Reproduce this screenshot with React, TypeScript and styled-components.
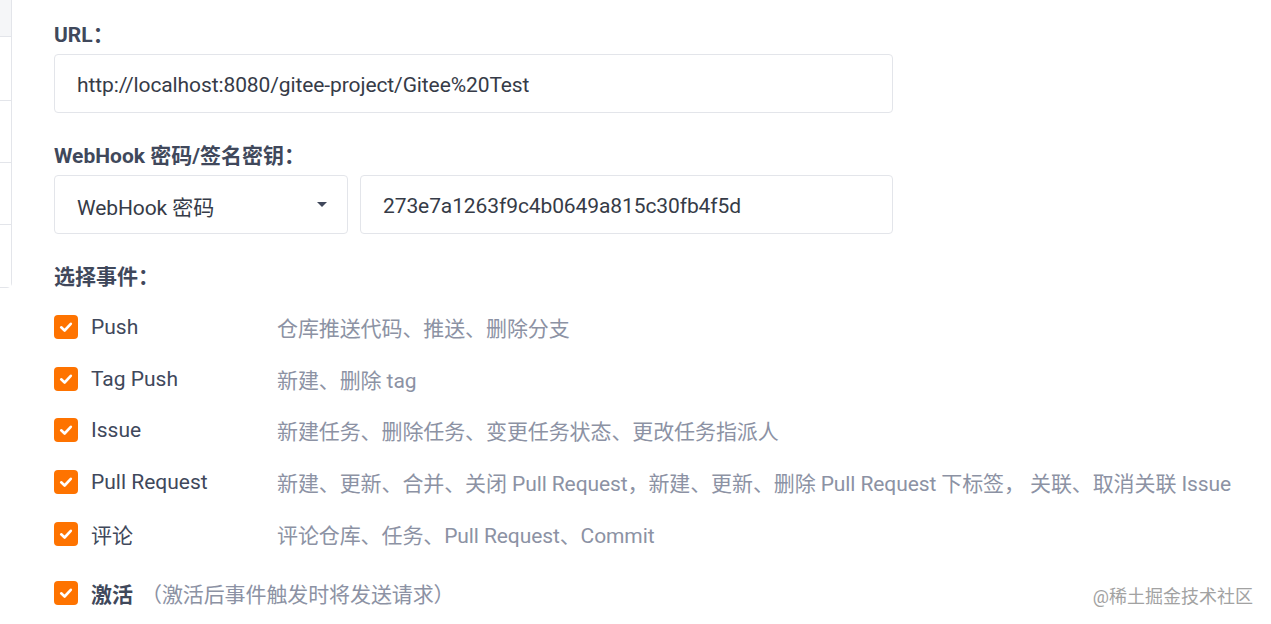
import React from "react";
import styled, { createGlobalStyle } from "styled-components";

const GlobalStyle = createGlobalStyle`
  html, body { margin: 0; padding: 0; background: #ffffff; }
  body {
    font-family: Roboto, "Noto Sans CJK SC", sans-serif;
    color: #40485b;
    width: 1271px;
    height: 624px;
    overflow: hidden;
  }
`;

const Page = styled.div`
  position: relative;
  display: flex;
  align-items: flex-start;
  width: 1271px;
  height: 624px;
  background: #fff;
`;

const SideCard = styled.div`
  width: 11px;
  border-right: 1px solid #e3e5ea;
  border-bottom: 1px solid #e3e5ea;
  border-bottom-right-radius: 5px;
  display: flex;
  flex-direction: column;
`;

const SideItem = styled.div<{ $h: number; $active?: boolean }>`
  height: ${(p) => p.$h}px;
  background: ${(p) => (p.$active ? "#f5f6f8" : "#fff")};
  border-top: ${(p) => (p.$active ? "none" : "1px solid #e3e5ea")};
  box-sizing: border-box;
`;

const Main = styled.div`
  margin-left: 42px;
  padding-top: 21px;
  display: flex;
  flex-direction: column;
  width: 839px;
`;

const Label = styled.div<{ $mt?: number }>`
  font-size: 21px;
  font-weight: 700;
  line-height: 28px;
  color: #40485b;
  margin-top: ${(p) => p.$mt ?? 0}px;
  margin-bottom: 5px;
  white-space: nowrap;
`;

const InputBox = styled.div<{ $w?: number; $grow?: boolean }>`
  box-sizing: border-box;
  height: 59px;
  ${(p) => (p.$w ? `width: ${p.$w}px; flex-shrink: 0;` : "")}
  ${(p) => (p.$grow ? "flex: 1;" : "")}
  border: 1px solid #e3e5ea;
  border-radius: 4px;
  padding: 2px 22px 0;
  display: flex;
  align-items: center;
  justify-content: space-between;
  font-size: 21px;
  letter-spacing: -0.1px;
  color: #363b47;
  background: #fff;
  white-space: nowrap;
`;

const InputRow = styled.div`
  display: flex;
  gap: 12px;
`;

const Caret = styled.span`
  width: 0;
  height: 0;
  border-left: 5px solid transparent;
  border-right: 5px solid transparent;
  border-top: 5px solid #40485b;
  margin-right: -2px;
  margin-top: -2px;
`;

const EventList = styled.div`
  margin-top: 5px;
  display: flex;
  flex-direction: column;
`;

const EventRow = styled.div<{ $mt?: number }>`
  height: 51.75px;
  display: flex;
  align-items: center;
  margin-top: ${(p) => p.$mt ?? 0}px;
`;

const CheckBox = styled.span`
  width: 24px;
  height: 24px;
  border-radius: 4px;
  background: #fe7300;
  display: inline-flex;
  align-items: center;
  justify-content: center;
  flex-shrink: 0;
`;

const EventName = styled.span<{ $bold?: boolean }>`
  margin-left: 13px;
  width: ${(p) => (p.$bold ? "auto" : "186px")};
  flex-shrink: 0;
  font-size: 21px;
  font-weight: ${(p) => (p.$bold ? 700 : 400)};
  color: #40485b;
  white-space: nowrap;
`;

const EventDesc = styled.span<{ $ml?: number }>`
  font-size: 21px;
  letter-spacing: -0.1px;
  color: #8c92a4;
  white-space: nowrap;
  margin-left: ${(p) => p.$ml ?? 0}px;
`;

const Watermark = styled.div`
  position: absolute;
  right: 18px;
  top: 582px;
  font-size: 18px;
  color: #a2a2a2;
`;

const Check = () => (
  <svg width="16" height="16" viewBox="0 0 16 16">
    <path d="M3.2 8.3 L6.6 11.5 L12.8 4.8" fill="none" stroke="#fff" strokeWidth="2.6" strokeLinecap="round" strokeLinejoin="round" />
  </svg>
);

const events = [
  { name: "Push", desc: "仓库推送代码、推送、删除分支" },
  { name: "Tag Push", desc: "新建、删除 tag" },
  { name: "Issue", desc: "新建任务、删除任务、变更任务状态、更改任务指派人" },
  { name: "Pull Request", desc: "新建、更新、合并、关闭 Pull Request，新建、更新、删除 Pull Request 下标签， 关联、取消关联 Issue" },
  { name: "评论", desc: "评论仓库、任务、Pull Request、Commit" },
];

export default function App() {
  return (
    <>
      <GlobalStyle />
      <Page>
        <SideCard>
          <SideItem $h={36} $active />
          <SideItem $h={64} />
          <SideItem $h={62} />
          <SideItem $h={62} />
          <SideItem $h={63} />
        </SideCard>
        <Main>
          <Label>URL：</Label>
          <InputBox>http://localhost:8080/gitee-project/Gitee%20Test</InputBox>
          <Label $mt={29}>WebHook 密码/签名密钥：</Label>
          <InputRow>
            <InputBox $w={294}>
              <span>WebHook 密码</span>
              <Caret />
            </InputBox>
            <InputBox $grow>273e7a1263f9c4b0649a815c30fb4f5d</InputBox>
          </InputRow>
          <Label $mt={29}>选择事件：</Label>
          <EventList>
            {events.map((e) => (
              <EventRow key={e.name}>
                <CheckBox>
                  <Check />
                </CheckBox>
                <EventName>{e.name}</EventName>
                <EventDesc>{e.desc}</EventDesc>
              </EventRow>
            ))}
            <EventRow $mt={7}>
              <CheckBox>
                <Check />
              </CheckBox>
              <EventName $bold>激活</EventName>
              <EventDesc $ml={8}>（激活后事件触发时将发送请求）</EventDesc>
            </EventRow>
          </EventList>
        </Main>
        <Watermark>@稀土掘金技术社区</Watermark>
      </Page>
    </>
  );
}
